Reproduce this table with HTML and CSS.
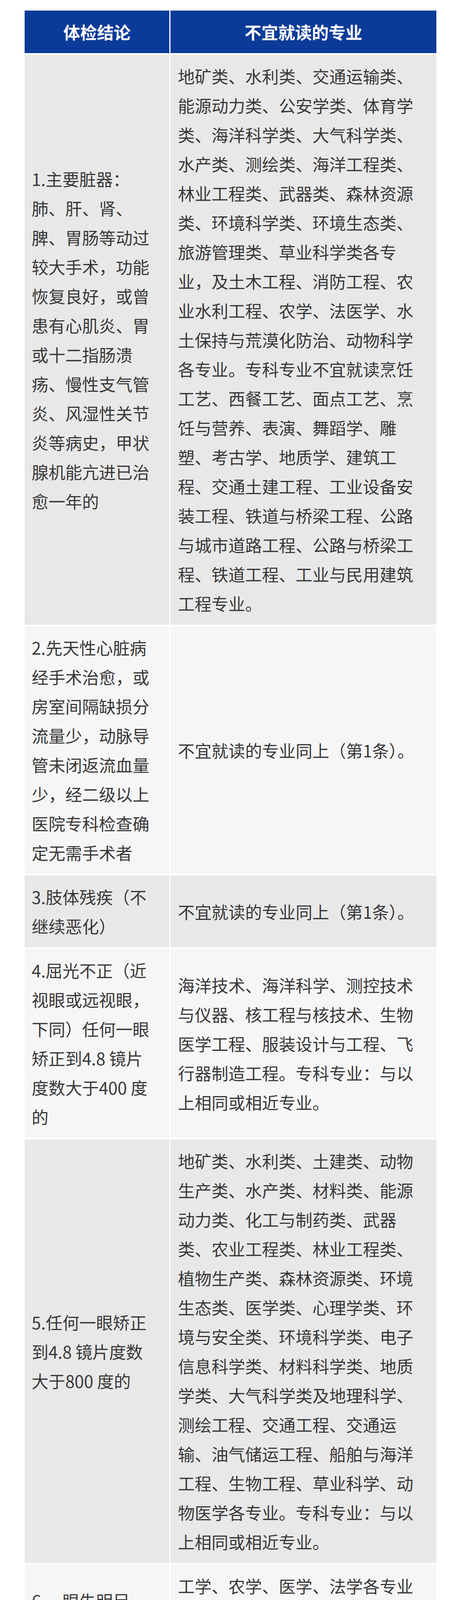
FILE: index.html
```html
<!DOCTYPE html>
<html lang="zh-CN">
<head>
<meta charset="utf-8">
<title>体检结论与不宜就读的专业</title>
<link rel="stylesheet" href="styles.css">
</head>
<body>
<div class="table">
  <div class="cell head">体检结论</div>
  <div class="cell head">不宜就读的专业</div>

  <div class="cell cond dark">1.主要脏器：<br>肺、肝、肾、脾、胃肠等动过较大手术，功能恢复良好，或曾患有心肌炎、胃或十二指肠溃疡、慢性支气管炎、风湿性关节炎等病史，甲状腺机能亢进已治愈一年的</div>
  <div class="cell major dark">地矿类、水利类、交通运输类、能源动力类、公安学类、体育学类、海洋科学类、大气科学类、水产类、测绘类、海洋工程类、林业工程类、武器类、森林资源类、环境科学类、环境生态类、旅游管理类、草业科学类各专业，及土木工程、消防工程、农业水利工程、农学、法医学、水土保持与荒漠化防治、动物科学各专业。专科专业不宜就读烹饪工艺、西餐工艺、面点工艺、烹饪与营养、表演、舞蹈学、雕塑、考古学、地质学、建筑工程、交通土建工程、工业设备安装工程、铁道与桥梁工程、公路与城市道路工程、公路与桥梁工程、铁道工程、工业与民用建筑工程专业。</div>

  <div class="cell cond light">2.先天性心脏病经手术治愈，或房室间隔缺损分流量少，动脉导管未闭返流血量少，经二级以上医院专科检查确定无需手术者</div>
  <div class="cell major light">不宜就读的专业同上（第1条）。</div>

  <div class="cell cond dark">3.肢体残疾（不继续恶化）</div>
  <div class="cell major dark">不宜就读的专业同上（第1条）。</div>

  <div class="cell cond light">4.屈光不正（近视眼或远视眼，下同）任何一眼矫正到4.8 镜片度数大于400 度的</div>
  <div class="cell major light">海洋技术、海洋科学、测控技术与仪器、核工程与核技术、生物医学工程、服装设计与工程、飞行器制造工程。专科专业：与以上相同或相近专业。</div>

  <div class="cell cond dark">5.任何一眼矫正到4.8 镜片度数大于800 度的</div>
  <div class="cell major dark">地矿类、水利类、土建类、动物生产类、水产类、材料类、能源动力类、化工与制药类、武器类、农业工程类、林业工程类、植物生产类、森林资源类、环境生态类、医学类、心理学类、环境与安全类、环境科学类、电子信息科学类、材料科学类、地质学类、大气科学类及地理科学、测绘工程、交通工程、交通运输、油气储运工程、船舶与海洋工程、生物工程、草业科学、动物医学各专业。专科专业：与以上相同或相近专业。</div>

  <div class="cell cond light">6.一眼失明另一眼矫正到4.8 镜片度数大于400 度的</div>
  <div class="cell major light">工学、农学、医学、法学各专业及应用物理学、应用化学、生物技术、地质学、生态学、环境科学、海洋科学、海洋技术、生物科学、应用心理学等专业。</div>

  <div class="cell cond dark">7.两耳听力均在3米以内，或一耳听力在5米另一耳全聋的</div>
  <div class="cell major dark">法学各专业、外国语言文学各专业以及外交学、新闻学、侦察学、学前教育、音乐学、录音艺术、土木工程、交通运输、动物科学、动物医学各专业、医学各专业。</div>

  <div class="cell cond light">8.嗅觉迟钝、口吃、步态异常、驼背，面部疤痕、血管瘤、黑色素痣、白癜风的</div>
  <div class="cell major light">教育学类、公安学类各专业以及外交学、法学、新闻学、音乐表演、表演各专业。烹饪与营养、烹饪工艺等。</div>

  <div class="cell cond dark">9.斜视、嗅觉迟钝、口吃</div>
  <div class="cell major dark">医学类专业。</div>
</div>
</body>
</html>
```

FILE: styles.css
```css
html, body {
  margin: 0;
  padding: 0;
  background: #ffffff;
}

body {
  font-family: "Noto Sans CJK SC", "Noto Sans", sans-serif;
  color: #383838;
}

.table {
  display: grid;
  grid-template-columns: 370px 680px;
  column-gap: 3px;
  row-gap: 4px;
  margin: 27px 0 30px 63px;
}

.cell {
  display: flex;
  align-items: center;
  font-size: 43px;
  line-height: 75px;
  box-sizing: border-box;
}

.head {
  height: 109px;
  justify-content: center;
  background: #0b3b98;
  color: #ffffff;
  font-weight: 700;
}

.cond {
  padding: 17px 31px 17px 18px;
}

.major {
  padding: 17px 36px 17px 19px;
}

.dark {
  background: #e8e8e8;
}

.light {
  background: #f6f6f6;
}
```
